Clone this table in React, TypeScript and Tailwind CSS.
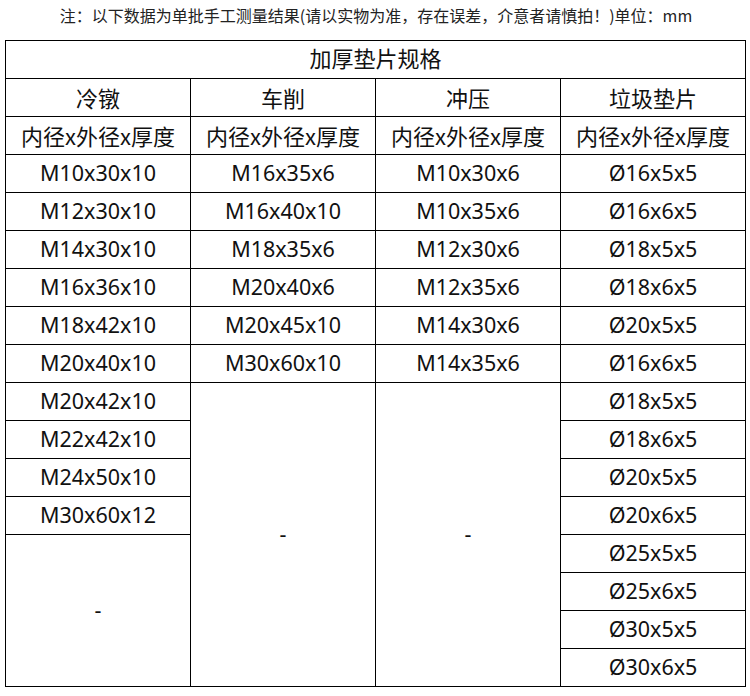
import React from "react";

const col1 = ["M10x30x10","M12x30x10","M14x30x10","M16x36x10","M18x42x10","M20x40x10","M20x42x10","M22x42x10","M24x50x10","M30x60x12"];
const col2 = ["M16x35x6","M16x40x10","M18x35x6","M20x40x6","M20x45x10","M30x60x10"];
const col3 = ["M10x30x6","M10x35x6","M12x30x6","M12x35x6","M14x30x6","M14x35x6"];
const col4 = ["Ø16x5x5","Ø16x6x5","Ø18x5x5","Ø18x6x5","Ø20x5x5","Ø16x6x5","Ø18x5x5","Ø18x6x5","Ø20x5x5","Ø20x6x5","Ø25x5x5","Ø25x6x5","Ø30x5x5","Ø30x6x5"];

const cjk = "font-['Noto_Sans_CJK_SC',sans-serif] text-[22px]";
const data = "font-['Noto_Sans','Noto_Sans_CJK_SC',sans-serif] text-[21.5px] pb-[1px]";
const cell = "border border-black text-center align-middle p-0 h-[38px] text-[#111]";

export default function App() {
  const rows = [];
  for (let i = 0; i < 14; i++) {
    rows.push(
      <tr key={i}>
        {i < 10 ? (
          <td className={`${cell} ${data}`}>{col1[i]}</td>
        ) : i === 10 ? (
          <td rowSpan={4} className={`${cell} ${data}`}>-</td>
        ) : null}
        {i < 6 ? (
          <td className={`${cell} ${data}`}>{col2[i]}</td>
        ) : i === 6 ? (
          <td rowSpan={8} className={`${cell} ${data}`}>-</td>
        ) : null}
        {i < 6 ? (
          <td className={`${cell} ${data}`}>{col3[i]}</td>
        ) : i === 6 ? (
          <td rowSpan={8} className={`${cell} ${data}`}>-</td>
        ) : null}
        <td className={`${cell} ${data}`}>{col4[i]}</td>
      </tr>
    );
  }
  return (
    <div className="w-[750px] h-[696px] bg-white">
      <div className="h-[40px] flex justify-center">
        <div className="h-[30px] leading-[30px] text-[16px] text-[#222] font-['Noto_Sans_CJK_SC',sans-serif] ml-[2px]">
          注：以下数据为单批手工测量结果(请以实物为准，存在误差，介意者请慎拍！)单位：mm
        </div>
      </div>
      <div className="pl-[5px]">
        <table className="border-collapse table-fixed w-[741px]">
          <colgroup>
            <col className="w-[185px]" />
            <col className="w-[185px]" />
            <col className="w-[185px]" />
            <col className="w-[185px]" />
          </colgroup>
          <tbody>
            <tr>
              <td colSpan={4} className={`${cell} ${cjk} pb-[4px]`}>加厚垫片规格</td>
            </tr>
            <tr>
              <td className={`${cell} ${cjk}`}>冷镦</td>
              <td className={`${cell} ${cjk}`}>车削</td>
              <td className={`${cell} ${cjk}`}>冲压</td>
              <td className={`${cell} ${cjk}`}>垃圾垫片</td>
            </tr>
            <tr>
              <td className={`${cell} ${cjk}`}>内径x外径x厚度</td>
              <td className={`${cell} ${cjk}`}>内径x外径x厚度</td>
              <td className={`${cell} ${cjk}`}>内径x外径x厚度</td>
              <td className={`${cell} ${cjk}`}>内径x外径x厚度</td>
            </tr>
            {rows}
          </tbody>
        </table>
      </div>
    </div>
  );
}
